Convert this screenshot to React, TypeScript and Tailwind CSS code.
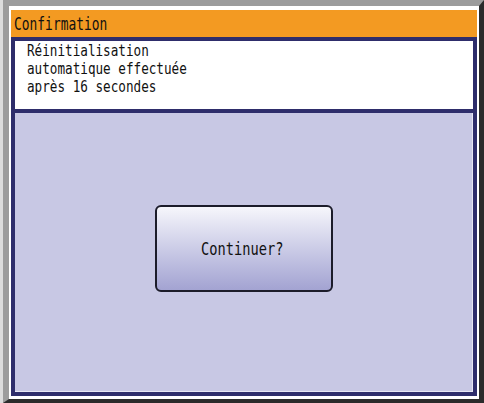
const font = { fontFamily: '"DejaVu Sans Mono", "Liberation Mono", monospace' };

export default function App() {
  return (
    <div className="w-[484px] h-[403px] bg-[#dcdcdc] pl-[3px]">
      {/* bevelled outer frame */}
      <div className="h-full border-t-[6px] border-l-[6px] border-r-[5px] border-b-[4px] border-t-[#9c9c9c] border-l-[#9c9c9c] border-r-[#2b2b2b] border-b-[#2b2b2b] bg-white pt-[4px] pl-[2px] pr-[2px] pb-[3px] flex flex-col">
        {/* title bar */}
        <div className="h-[27px] shrink-0 bg-[#f39a22] flex items-center pl-[3px] pt-[1px]">
          <span
            className="text-[17px] leading-none text-[#111] inline-block origin-left scale-x-[0.76]"
            style={font}
          >
            Confirmation
          </span>
        </div>

        {/* dialog body */}
        <div className="flex-1 flex flex-col border-[4px] border-[#2e2d6b]">
          <div className="h-[68px] shrink-0 bg-white pl-[12px] pt-[1px] flex flex-col">
            {["Réinitialisation", "automatique effectuée", "après 16 secondes"].map((line) => (
              <span
                key={line}
                className="h-[18px] text-[16px] leading-[18px] text-[#111] origin-left scale-x-[0.79] whitespace-nowrap"
                style={font}
              >
                {line}
              </span>
            ))}
          </div>
          <div className="h-[4px] shrink-0 bg-[#2e2d6b]" />
          <div className="flex-1 bg-[#c8c8e4] border-r border-b border-[#e6e6f2] flex items-center justify-center pb-[7px]">
            <button className="w-[178px] h-[87px] rounded-[6px] border-[2px] border-[#1c1c2a] bg-gradient-to-b from-[#f6f6fb] to-[#a3a3d2] flex items-center justify-center">
              <span
                className="text-[18px] leading-none text-[#111] inline-block scale-x-[0.76] -translate-x-[1px]"
                style={font}
              >
                Continuer?
              </span>
            </button>
          </div>
        </div>
      </div>
    </div>
  );
}
